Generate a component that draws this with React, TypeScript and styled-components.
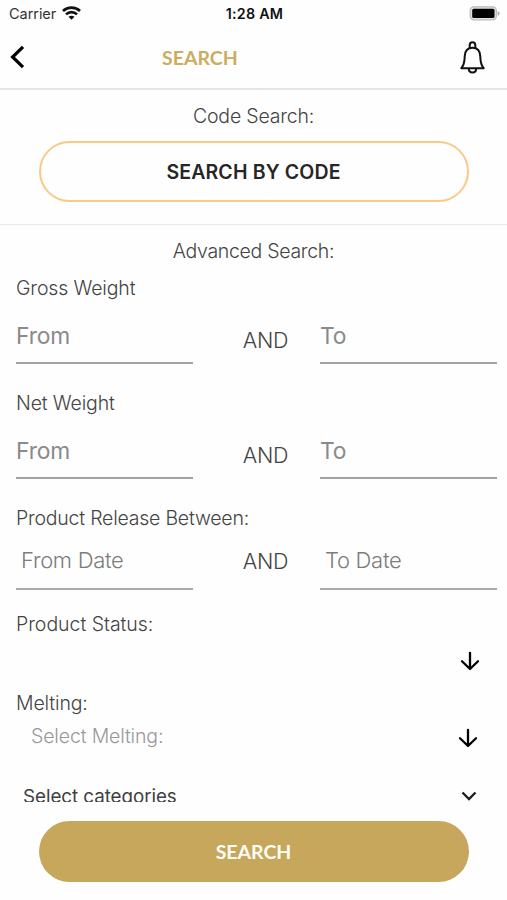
import React from "react";
import styled, { createGlobalStyle } from "styled-components";

const GlobalStyle = createGlobalStyle`
  * { box-sizing: border-box; }
  body { margin: 0; background: #fefefe; }
  button { font: inherit; cursor: pointer; }
`;

const Screen = styled.div`
  width: 507px;
  height: 900px;
  display: flex;
  flex-direction: column;
  overflow: hidden;
  background: #fefefe;
  color: #444;
  font-family: Inter, "Liberation Sans", sans-serif;
  font-weight: 300;
`;

const StatusBar = styled.div`
  height: 28px;
  flex: none;
  display: grid;
  grid-template-columns: 1fr auto 1fr;
  align-items: center;
  padding: 0 7px 2px 9px;
  color: #111;
  font-size: 14.5px;
  font-weight: 400;
`;

const Carrier = styled.div`
  display: flex;
  align-items: center;
  gap: 6px;
  color: #333;
  letter-spacing: -0.05px;
`;

const Clock = styled.div`
  padding-top: 1px;
  font-size: 14.3px;
  font-weight: 600;
  letter-spacing: 0.25px;
`;

const BatterySlot = styled.div`
  display: flex;
  justify-content: flex-end;
`;

const NavBar = styled.header`
  height: 62px;
  flex: none;
  display: flex;
  align-items: center;
  padding: 0 22px 2px 9px;
  border-bottom: 2px solid #e4e4e4;
`;

const IconButton = styled.button`
  display: flex;
  padding: 0;
  border: 0;
  background: none;
  color: #000;
`;

const NavTitle = styled.h1`
  flex: 1;
  margin: 1px 0 0 137px;
  color: #ccad5f;
  font-family: Lato, sans-serif;
  font-size: 19.5px;
  font-weight: 700;
  line-height: 24px;
`;

const CodeSection = styled.section`
  height: 135px;
  flex: none;
  display: flex;
  flex-direction: column;
  align-items: center;
  padding-top: 14px;
  border-bottom: 1px solid #e8e8e8;
`;

const SectionTitle = styled.h2<{ $spacing: number }>`
  margin: 0;
  font-size: 19.5px;
  font-weight: 300;
  line-height: 24px;
  letter-spacing: ${(p) => p.$spacing}px;
  text-align: center;
`;

const PillButton = styled.button<{ $filled?: boolean }>`
  width: 430px;
  height: 61px;
  flex: none;
  display: flex;
  align-items: center;
  justify-content: center;
  padding: 0;
  border: ${(p) => (p.$filled ? "0" : "2.5px solid #f9ca86")};
  border-radius: 31px;
  background: ${(p) => (p.$filled ? "#c6a75b" : "#fefefe")};
  color: ${(p) => (p.$filled ? "#fffdf6" : "#262626")};
  && {
    font-family: ${(p) => (p.$filled ? "Lato, sans-serif" : "Inter, sans-serif")};
    font-size: 19.5px;
    font-weight: ${(p) => (p.$filled ? 700 : 600)};
    letter-spacing: ${(p) => (p.$filled ? "0" : "0.15px")};
  }
`;

const CodeButton = styled(PillButton)`
  margin-top: 13px;
`;

const AdvancedSection = styled.section`
  height: 577px;
  flex: none;
  overflow: hidden;
  padding-top: 14px;
`;

const Field = styled.div<{ $height: number; $top?: number }>`
  height: ${(p) => p.$height}px;
  padding: ${(p) => p.$top ?? 0}px 10px 0 16px;
`;

const Label = styled.label<{ $spacing?: number }>`
  display: block;
  font-size: 19.5px;
  line-height: 24px;
  letter-spacing: ${(p) => p.$spacing ?? -0.15}px;
  white-space: nowrap;
`;

const Range = styled.div<{ $height: number }>`
  height: ${(p) => p.$height}px;
  display: grid;
  grid-template-columns: 177px 1fr 177px;
`;

const Input = styled.div<{ $date?: boolean }>`
  padding: ${(p) => (p.$date ? "15px 0 0 5px" : "21px 0 0 0")};
  border-bottom: ${(p) => (p.$date ? "2px solid #aaa" : "2px solid #a3a3a3")};
  color: ${(p) => (p.$date ? "#7c7c7c" : "#8a8a8a")};
  font-size: ${(p) => (p.$date ? 22 : 22.8)}px;
  font-weight: ${(p) => (p.$date ? 300 : 400)};
  line-height: 30px;
  letter-spacing: ${(p) => (p.$date ? -0.3 : -0.15)}px;
`;

const Conjunction = styled.div<{ $date?: boolean }>`
  padding: ${(p) => (p.$date ? 16 : 25)}px 0 0 18px;
  text-align: center;
  font-size: 21.5px;
  line-height: 30px;
  letter-spacing: -0.3px;
`;

const SelectRow = styled.div<{ $kind: "status" | "melting" | "category" }>`
  display: flex;
  align-items: center;
  justify-content: space-between;
  height: ${(p) => (p.$kind === "status" ? 48 : 42)}px;
  margin-top: ${(p) => (p.$kind === "category" ? 18 : 0)}px;
  padding: ${(p) =>
    p.$kind === "status" ? "2px 17px 0 0" : p.$kind === "melting" ? "0 19px 0 15px" : "0 20px 0 7px"};
  color: ${(p) => (p.$kind === "category" ? "#404040" : "#999")};
  font-size: ${(p) => (p.$kind === "category" ? 18.8 : 19.5)}px;
  font-weight: ${(p) => (p.$kind === "category" ? 400 : 300)};
  letter-spacing: ${(p) => (p.$kind === "category" ? -0.05 : -0.15)}px;
`;

const SelectIcon = styled.span<{ $drop?: number }>`
  display: flex;
  padding-top: ${(p) => p.$drop ?? 0}px;
`;

const Footer = styled.footer`
  display: flex;
  justify-content: center;
  padding-top: 19px;
`;

const Wifi = () => (
  <svg width="19" height="14" viewBox="0 0 19 14" fill="none" stroke="#111" strokeWidth="2.7">
    <path d="M1 5C5.7.5 13.3.5 18 5M4 8.4c3.1-3 7.9-3 11 0" />
    <path d="m9.5 13.8-3-3c1.7-1.5 4.3-1.5 6 0z" fill="#111" stroke="none" />
  </svg>
);

const Battery = () => (
  <svg width="31" height="15" viewBox="0 0 31 15">
    <rect x="1.2" y=".8" width="26.2" height="13" rx="3.7" fill="#e0e0e0" stroke="#bbb" strokeWidth="1.2" />
    <rect x="3.2" y="2.7" width="22.3" height="9.3" rx="1.6" fill="#000" />
    <path d="M28.7 5v4.8c2.5-.7 2.5-4.1 0-4.8z" fill="#aaa" />
  </svg>
);

const Back = () => (
  <svg width="16" height="24" viewBox="0 0 16 24" fill="none" stroke="#000" strokeWidth="3.2">
    <path d="M14 1.8 3.6 12 14 22.2" />
  </svg>
);

const Bell = () => (
  <svg width="25" height="33" viewBox="0 0 25 33" fill="none" stroke="#111" strokeWidth="2" strokeLinejoin="round">
    <path d="M9.7 7.1V4.2c0-3.8 5.6-3.8 5.6 0v2.9" />
    <path d="M1.3 27.2c2.4-2.8 3-5.5 3.3-9.6l.1-2.2c.2-5 2.6-8.6 7.8-8.6s7.6 3.6 7.8 8.6l.1 2.2c.3 4.1.9 6.8 3.3 9.6z" />
    <path d="M8.7 27.2c.2 5.7 7.4 5.7 7.6 0" />
  </svg>
);

const ArrowDown = () => (
  <svg width="20" height="20" viewBox="0 0 20 20" fill="none" stroke="#000" strokeWidth="2.3" strokeLinecap="round" strokeLinejoin="round">
    <path d="M10 2v16M2 10.2l8 7.8 8-7.8" />
  </svg>
);

const Chevron = () => (
  <svg width="16" height="10" viewBox="0 0 16 10" fill="none" stroke="#1c1c1c" strokeWidth="2.3">
    <path d="m1.5 1.5 6.5 6.5 6.5-6.5" />
  </svg>
);

const RangeInputs = ({ from, to, height, date }: { from: string; to: string; height: number; date?: boolean }) => (
  <Range $height={height}>
    <Input $date={date}>{from}</Input>
    <Conjunction $date={date}>AND</Conjunction>
    <Input $date={date}>{to}</Input>
  </Range>
);

export default function App() {
  return (
    <>
      <GlobalStyle />
      <Screen>
        <StatusBar>
          <Carrier>Carrier <Wifi /></Carrier>
          <Clock>1:28 AM</Clock>
          <BatterySlot><Battery /></BatterySlot>
        </StatusBar>
        <NavBar>
          <IconButton aria-label="Back"><Back /></IconButton>
          <NavTitle>SEARCH</NavTitle>
          <IconButton aria-label="Notifications"><Bell /></IconButton>
        </NavBar>
        <CodeSection>
          <SectionTitle $spacing={-0.2}>Code Search:</SectionTitle>
          <CodeButton>SEARCH BY CODE</CodeButton>
        </CodeSection>
        <AdvancedSection>
          <SectionTitle $spacing={-0.3}>Advanced Search:</SectionTitle>
          <Field $height={115} $top={13}>
            <Label>Gross Weight</Label>
            <RangeInputs from="From" to="To" height={64} />
          </Field>
          <Field $height={115} $top={13}>
            <Label>Net Weight</Label>
            <RangeInputs from="From" to="To" height={64} />
          </Field>
          <Field $height={106} $top={13}>
            <Label $spacing={-0.22}>Product Release Between:</Label>
            <RangeInputs from="From Date" to="To Date" height={60} date />
          </Field>
          <Field $height={79} $top={13}>
            <Label $spacing={-0.03}>Product Status:</Label>
            <SelectRow $kind="status"><span /><SelectIcon><ArrowDown /></SelectIcon></SelectRow>
          </Field>
          <Field $height={130} $top={13}>
            <Label>Melting:</Label>
            <SelectRow $kind="melting">Select Melting:<SelectIcon $drop={4}><ArrowDown /></SelectIcon></SelectRow>
            <SelectRow $kind="category">Select categories<SelectIcon><Chevron /></SelectIcon></SelectRow>
          </Field>
        </AdvancedSection>
        <Footer>
          <PillButton $filled>SEARCH</PillButton>
        </Footer>
      </Screen>
    </>
  );
}
